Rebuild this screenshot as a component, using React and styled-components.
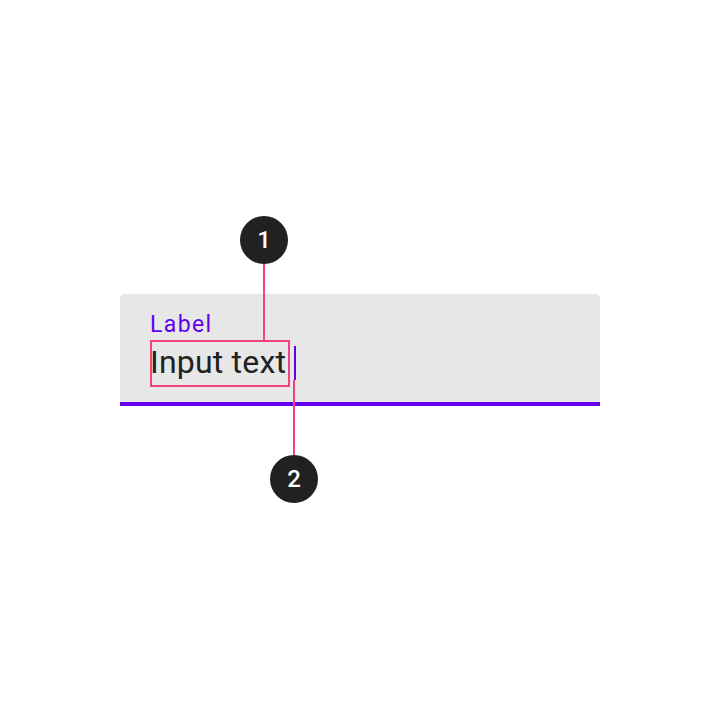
import styled, { createGlobalStyle } from "styled-components";

const GlobalStyle = createGlobalStyle`
  html, body {
    margin: 0;
    padding: 0;
    background: #ffffff;
    font-family: "Roboto", "Liberation Sans", sans-serif;
  }
`;

const PINK = "#f3437f";
const PURPLE = "#6200ee";

export default function App() {
  return (
    <>
      <GlobalStyle />
      <Page>
        <Field>
          <Label>Label</Label>
          <InputRow>
            <InputText>
              Input text
              <Highlight />
            </InputText>
            <Caret />
          </InputRow>
          <Callout style={{ left: 120, top: -78 }} lineLength={76}>
            <Badge>1</Badge>
          </Callout>
          <CalloutBelow style={{ left: 150, top: 86 }} lineLength={75}>
            <Badge>2</Badge>
          </CalloutBelow>
        </Field>
      </Page>
    </>
  );
}

const Page = styled.div`
  width: 720px;
  height: 720px;
  display: flex;
  flex-direction: column;
  align-items: center;
  padding-top: 294px;
  box-sizing: border-box;
`;

const Field = styled.div`
  position: relative;
  width: 480px;
  height: 112px;
  box-sizing: border-box;
  padding: 19px 30px 0;
  background: #e7e7e7;
  border-radius: 5px 5px 0 0;
  border-bottom: 4px solid ${PURPLE};
  display: flex;
  flex-direction: column;
  gap: 7px;
`;

const Label = styled.span`
  font-size: 23px;
  line-height: 24px;
  color: ${PURPLE};
  letter-spacing: 1.4px;
`;

const InputRow = styled.div`
  display: flex;
  align-items: flex-start;
`;

const InputText = styled.span`
  position: relative;
  font-size: 32px;
  line-height: 36px;
  letter-spacing: 0.2px;
  color: #212121;
`;

const Highlight = styled.span`
  position: absolute;
  left: 0;
  right: -4px;
  top: -4px;
  bottom: -7px;
  border: 2px solid ${PINK};
`;

const Caret = styled.span`
  width: 2px;
  height: 34px;
  margin-top: 2px;
  margin-left: 8px;
  background: ${PURPLE};
`;

const Callout = styled.div`
  position: absolute;
  width: 48px;
  display: flex;
  flex-direction: column;
  align-items: center;
  &::after {
    content: "";
    width: 2px;
    height: ${(p) => p.lineLength}px;
    background: ${PINK};
  }
`;

const CalloutBelow = styled(Callout)`
  flex-direction: column-reverse;
`;

const Badge = styled.div`
  width: 48px;
  height: 48px;
  border-radius: 50%;
  background: #212121;
  color: #ffffff;
  display: flex;
  align-items: center;
  justify-content: center;
  font-size: 24px;
  font-weight: 500;
`;
